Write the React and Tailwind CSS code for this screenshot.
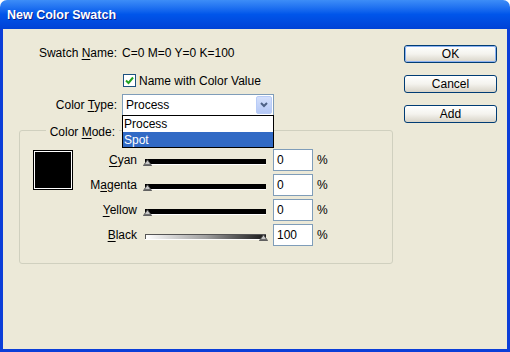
import React from "react";

function Thumb() {
  return (
    <svg width="9" height="7" viewBox="0 0 9 7" className="block">
      <polygon points="0.5,6.5 4.5,0.8 8.5,6.5" fill="#C8C8C8" stroke="#505050" strokeWidth="1" />
      <rect x="1" y="5" width="7" height="1.5" fill="#707070" />
    </svg>
  );
}

function Slider({ gradient, right }) {
  return (
    <div className="relative ml-[6px] w-[124px] h-[22px] flex items-center">
      <div className="mt-[4px] ml-[2px] w-[121px] h-[6px] border-b border-white">
        {gradient ? (
          <div className="h-full border-t border-l border-[#555] bg-gradient-to-r from-white via-[#a0a0a0] to-[#1a1a1a]" />
        ) : (
          <div className="h-full bg-black" />
        )}
      </div>
      <div className={"absolute top-[10px] " + (right ? "left-[116px]" : "left-0")}>
        <Thumb />
      </div>
    </div>
  );
}

function Row({ pre, u, rest, value, gradient, right }) {
  return (
    <div className="flex items-center h-[22px]">
      <div className="w-[64px] text-right">
        {pre}
        <span className="underline underline-offset-2">{u}</span>
        {rest}
      </div>
      <Slider gradient={gradient} right={right} />
      <div className="ml-[6px] w-[40px] h-[22px] border border-[#7F9DB9] bg-white flex items-center pl-[3px]">
        {value}
      </div>
      <div className="ml-[4px]">%</div>
    </div>
  );
}

function Button({ children, def }) {
  return (
    <div className="w-[93px] h-[18px] rounded-[3px] border border-[#003C74] bg-gradient-to-b from-white via-[#F4F3EE] to-[#D8D4C8] flex">
      <div className={"flex-1 rounded-[2px] flex items-center justify-center " + (def ? "border border-[#8DB2F0]" : "")}>
        {children}
      </div>
    </div>
  );
}

export default function App() {
  return (
    <div className="w-[510px] h-[352px] flex flex-col font-['Liberation_Sans',sans-serif] text-[12px] text-black bg-white overflow-hidden">
      <div className="h-[29px] rounded-t-[7px] bg-gradient-to-b from-[#3D8DF7] via-[#0055EA] to-[#0042D6] flex items-center pl-[7px]">
        <span className="text-white font-bold text-[12.5px] [text-shadow:1px_1px_0_#0A1E8A] mt-[2px]">
          New Color Swatch
        </span>
      </div>
      <div className="flex-1 flex bg-[#ECE9D8] border-x-[3px] border-b-[3px] border-[#0B3ED8]">
        <div className="relative w-[401px] flex flex-col">
          <div className="flex items-center h-[16px] mt-[16px]">
            <div className="w-[114px] text-right">
              Swatch <span className="underline underline-offset-2">N</span>ame:
            </div>
            <div className="ml-[5px]">C=0 M=0 Y=0 K=100</div>
          </div>
          <div className="flex items-center h-[13px] mt-[13px] pl-[120px]">
            <div className="w-[13px] h-[13px] border border-[#1C5180] bg-white flex items-center justify-center">
              <svg width="9" height="9" viewBox="0 0 9 9">
                <path d="M1 4.5 L3.5 7 L8 1.5" fill="none" stroke="#21A121" strokeWidth="2" />
              </svg>
            </div>
            <div className="ml-[3px]">Name with Color Value</div>
          </div>
          <div className="flex items-center h-[22px] mt-[7px]">
            <div className="w-[114px] text-right">
              Color <span className="underline underline-offset-2">T</span>ype:
            </div>
            <div className="ml-[5px] w-[152px] h-[22px] border border-[#7F9DB9] bg-white flex items-center pl-[3px] pr-[1px]">
              <div className="flex-1">Process</div>
              <div className="w-[16px] h-[18px] rounded-[2px] border border-[#B8CCF7] bg-gradient-to-b from-[#D4E0FB] to-[#B4C8F6] flex items-center justify-center">
                <svg width="8" height="6" viewBox="0 0 8 6">
                  <path d="M1 1 L4 4 L7 1" fill="none" stroke="#4D6185" strokeWidth="2" />
                </svg>
              </div>
            </div>
          </div>
          <div className="mt-[14px] ml-[16px] w-[374px] h-[134px] rounded-[3px] border border-[#D0D0BF] flex flex-col">
            <div className="-mt-[8px] h-[16px] flex">
              <div className="w-[99px] flex justify-end">
                <span className="bg-[#ECE9D8] pl-[4px] pr-[4px]">
                  Color <span className="underline underline-offset-2">M</span>ode:
                </span>
              </div>
            </div>
            <div className="flex pl-[13px] mt-[10px]">
              <div className="mt-[1px] w-[40px] h-[40px] border border-black bg-white p-[1px]">
                <div className="w-full h-full bg-black" />
              </div>
              <div className="flex flex-col gap-[3px]">
                <Row u="C" rest="yan" value="0" />
                <Row pre="M" u="a" rest="genta" value="0" />
                <Row u="Y" rest="ellow" value="0" />
                <Row u="B" rest="lack" value="100" gradient right />
              </div>
            </div>
          </div>
          <div className="absolute left-[119px] top-[86px] w-[152px] h-[33px] border border-black bg-white flex flex-col">
            <div className="h-[16px] flex items-center pl-[1px]">Process</div>
            <div className="h-[15px] flex items-center pl-[1px] bg-[#316AC5] text-white">Spot</div>
          </div>
        </div>
        <div className="flex flex-col gap-[12px] pt-[16px]">
          <Button def>OK</Button>
          <Button>Cancel</Button>
          <Button>Add</Button>
        </div>
      </div>
    </div>
  );
}
